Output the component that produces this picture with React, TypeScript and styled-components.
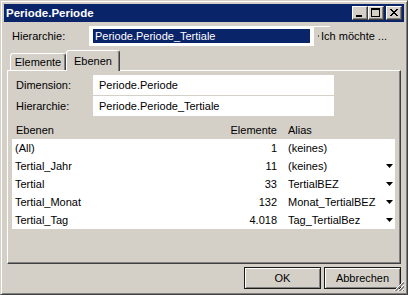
import styled, { createGlobalStyle } from 'styled-components';

const GlobalStyle = createGlobalStyle`
	html, body {
		margin: 0;
		padding: 0;
		background: #d4d0c8;
	}
	body {
		font-family: "Liberation Sans", Arial, sans-serif;
		font-size: 11px;
		color: #000;
	}
	* {
		box-sizing: border-box;
	}
`

const Window = styled.div`
	position: relative;
	width: 408px;
	height: 295px;
	display: flex;
	flex-direction: column;
	padding: 3px;
	background: #d4d0c8;
	border: 1px solid;
	border-color: #d4d0c8 #404040 #404040 #d4d0c8;
	box-shadow: inset 1px 1px #fff, inset -1px -1px #808080;
`
const TitleBar = styled.div`
	display: flex;
	align-items: center;
	height: 18px;
	padding: 0 2px 0 2px;
	background: #0a246a;
	color: #fff;
	font-weight: bold;
	font-size: 11.5px;
`
const Title = styled.div`
	flex: 1;
`
const CaptionButtons = styled.div`
	display: flex;
	align-items: center;
`
const CaptionButton = styled.div<{ gap?: number }>`
	width: 16px;
	height: 14px;
	margin-left: ${({ gap }) => gap ?? 0}px;
	display: flex;
	align-items: center;
	justify-content: center;
	background: #d4d0c8;
	border: 1px solid;
	border-color: #fff #404040 #404040 #fff;
	box-shadow: inset -1px -1px #808080;
`
const FieldRow = styled.div<{ top?: number }>`
	display: flex;
	align-items: center;
	height: 20px;
	margin-top: ${({ top }) => top ?? 0}px;
`
const Label = styled.div<{ indent: number }>`
	width: ${({ indent }) => indent + 81}px;
	padding-left: ${({ indent }) => indent + 4}px;
	flex-shrink: 0;
`
const SelectBox = styled.div`
	width: 225px;
	height: 20px;
	padding: 3px 4px;
	background: #fff;
`
const Selected = styled.div`
	height: 14px;
	line-height: 14px;
	padding-left: 2px;
	background: #0a246a;
	color: #fff;
`
const MenuLink = styled.div`
	position: relative;
	height: 20px;
	display: flex;
	align-items: center;
	padding-left: 7px;
	white-space: nowrap;
	&::before {
		content: '';
		position: absolute;
		left: 0;
		top: 0;
		width: 16px;
		height: 1px;
		background: #fff;
	}
	&::after {
		content: '';
		position: absolute;
		left: 4px;
		top: 9px;
		width: 1px;
		height: 2px;
		background: #606060;
	}
`
const TextBox = styled.div`
	width: 241px;
	height: 20px;
	line-height: 20px;
	padding-left: 6px;
	background: #fff;
`
const TabStrip = styled.div`
	display: flex;
	align-items: flex-end;
	height: 20px;
	margin-top: 4px;
	padding-left: 6px;
`
const Tab = styled.div<{ active?: boolean; w: number }>`
	position: relative;
	z-index: ${({ active }) => (active ? 1 : 0)};
	width: ${({ w }) => w}px;
	height: ${({ active }) => (active ? 21 : 17)}px;
	margin-bottom: ${({ active }) => (active ? -1 : 0)}px;
	display: flex;
	align-items: center;
	justify-content: center;
	padding-bottom: ${({ active }) => (active ? 1 : 0)}px;
	background: #d4d0c8;
	border: 1px solid;
	border-bottom: none;
	border-color: #fff #404040 transparent #fff;
	border-radius: 3px 3px 0 0;
	box-shadow: inset -1px 0 #808080;
`
const Panel = styled.div`
	height: 194px;
	margin: 0 3px;
	padding: 4px 5px 0 4px;
	border: 1px solid;
	border-color: #fff #404040 #404040 #fff;
	box-shadow: inset -1px -1px #808080;
	display: flex;
	flex-direction: column;
	gap: 1px;
`
const LevelsRow = styled.div<{ header?: boolean }>`
	display: grid;
	grid-template-columns: 1fr 66px 100px 12px;
	align-items: center;
	height: ${({ header }) => (header ? 21 : 18)}px;
	padding-top: ${({ header }) => (header ? 5 : 0)}px;
	white-space: nowrap;
`
const LevelsGrid = styled.div`
	background: #fff;
`
const NameCell = styled.div<{ header?: boolean }>`
	padding-left: ${({ header }) => (header ? 4 : 3)}px;
`
const CountCell = styled.div`
	text-align: right;
	padding-right: 6px;
`
const AliasCell = styled.div`
	padding-left: 5px;
`
const ArrowCell = styled.div`
	display: flex;
	justify-content: center;
	align-items: center;
`
const Footer = styled.div`
	display: flex;
	justify-content: flex-end;
	gap: 3px;
	margin-top: 3px;
	padding-right: 3px;
`
const Button = styled.div`
	width: 77px;
	height: 22px;
	display: flex;
	align-items: center;
	justify-content: center;
	background: #d4d0c8;
	border: 1px solid #1a1a1a;
	box-shadow: inset 1px 1px #fff, inset -1px -1px #808080;
`
const Grip = styled.svg`
	position: absolute;
	right: 2px;
	bottom: 2px;
`

type TLevel = {
	name: string;
	count: string;
	alias: string;
	dropdown: boolean;
}

const levels: TLevel[] = [
	{ name: '(All)', count: '1', alias: '(keines)', dropdown: false },
	{ name: 'Tertial_Jahr', count: '11', alias: '(keines)', dropdown: true },
	{ name: 'Tertial', count: '33', alias: 'TertialBEZ', dropdown: true },
	{ name: 'Tertial_Monat', count: '132', alias: 'Monat_TertialBEZ', dropdown: true },
	{ name: 'Tertial_Tag', count: '4.018', alias: 'Tag_TertialBez', dropdown: true },
];

const DownArrow = () => (
	<svg width="7" height="4" viewBox="0 0 7 4">
		<polygon points="0,0 7,0 3.5,4" fill="#000" />
	</svg>
);

const App = () => {
	return (
		<Window>
			<GlobalStyle />
			<TitleBar>
				<Title>Periode.Periode</Title>
				<CaptionButtons>
					<CaptionButton>
						<svg width="14" height="12" viewBox="0 0 14 12">
							<rect x="3" y="8" width="6" height="2" fill="#000" />
						</svg>
					</CaptionButton>
					<CaptionButton>
						<svg width="14" height="12" viewBox="0 0 14 12">
							<rect x="2.5" y="1.5" width="8" height="8" fill="none" stroke="#000" />
							<rect x="2" y="1" width="9" height="2" fill="#000" />
						</svg>
					</CaptionButton>
					<CaptionButton gap={2}>
						<svg width="14" height="12" viewBox="0 0 14 12">
							<path d="M3 2 L10 9 M4 2 L11 9 M10 2 L3 9 M11 2 L4 9" stroke="#000" strokeWidth="1" />
						</svg>
					</CaptionButton>
				</CaptionButtons>
			</TitleBar>

			<FieldRow top={4}>
				<Label indent={4}>Hierarchie:</Label>
				<SelectBox>
					<Selected>Periode.Periode_Tertiale</Selected>
				</SelectBox>
				<MenuLink>Ich möchte ...</MenuLink>
			</FieldRow>

			<TabStrip>
				<Tab w={56}>Elemente</Tab>
				<Tab w={54} active>Ebenen</Tab>
			</TabStrip>

			<Panel>
				<FieldRow>
					<Label indent={0}>Dimension:</Label>
					<TextBox>Periode.Periode</TextBox>
				</FieldRow>
				<FieldRow>
					<Label indent={0}>Hierarchie:</Label>
					<TextBox>Periode.Periode_Tertiale</TextBox>
				</FieldRow>
				<LevelsRow header>
					<NameCell header>Ebenen</NameCell>
					<CountCell>Elemente</CountCell>
					<AliasCell>Alias</AliasCell>
					<div />
				</LevelsRow>
				<LevelsGrid>
					{levels.map((level) => (
						<LevelsRow key={level.name}>
							<NameCell>{level.name}</NameCell>
							<CountCell>{level.count}</CountCell>
							<AliasCell>{level.alias}</AliasCell>
							<ArrowCell>{level.dropdown && <DownArrow />}</ArrowCell>
						</LevelsRow>
					))}
				</LevelsGrid>
			</Panel>

			<Footer>
				<Button>OK</Button>
				<Button>Abbrechen</Button>
			</Footer>

			<Grip width="12" height="12" viewBox="0 0 12 12">
				<path d="M11 1 L1 11 M11 5 L5 11 M11 9 L9 11" stroke="#fff" />
				<path d="M11 2 L2 11 M11 3 L3 11 M11 6 L6 11 M11 7 L7 11 M11 10 L10 11" stroke="#808080" />
			</Grip>
		</Window>
	);
}

export default App;
